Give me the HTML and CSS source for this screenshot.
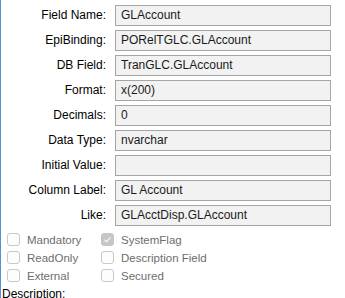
FILE: index.html
```html
<!DOCTYPE html>
<html>
<head>
<meta charset="utf-8">
<link rel="stylesheet" href="styles.css">
</head>
<body>
<div class="panel">
  <div class="fields">
    <label class="lbl">Field Name:</label><div class="box">GLAccount</div>
    <label class="lbl">EpiBinding:</label><div class="box">PORelTGLC.GLAccount</div>
    <label class="lbl">DB Field:</label><div class="box">TranGLC.GLAccount</div>
    <label class="lbl">Format:</label><div class="box">x(200)</div>
    <label class="lbl">Decimals:</label><div class="box">0</div>
    <label class="lbl">Data Type:</label><div class="box">nvarchar</div>
    <label class="lbl">Initial Value:</label><div class="box"></div>
    <label class="lbl">Column Label:</label><div class="box">GL Account</div>
    <label class="lbl">Like:</label><div class="box">GLAcctDisp.GLAccount</div>
  </div>
  <div class="checks">
    <div class="chk"><span class="cb"></span><span class="ct">Mandatory</span></div>
    <div class="chk"><span class="cb checked"><svg width="13" height="13" viewBox="0 0 13 13"><path d="M3.5 6.8 L5.6 8.8 L9.6 4.4" fill="none" stroke="#f4f4f4" stroke-width="1.3"/></svg></span><span class="ct">SystemFlag</span></div>
    <div class="chk"><span class="cb"></span><span class="ct">ReadOnly</span></div>
    <div class="chk"><span class="cb"></span><span class="ct">Description Field</span></div>
    <div class="chk"><span class="cb"></span><span class="ct">External</span></div>
    <div class="chk"><span class="cb"></span><span class="ct">Secured</span></div>
  </div>
  <div class="desc">Description:</div>
</div>
</body>
</html>
```
FILE: styles.css
```css
html, body {
  margin: 0;
  padding: 0;
  background: #ffffff;
}
body {
  font-family: "Liberation Sans", Arial, sans-serif;
  font-size: 12px;
  color: #000;
}
.panel {
  width: 344px;
  height: 298px;
  border-left: 1px solid #5a8fd6;
  overflow: hidden;
}
.fields {
  display: grid;
  grid-template-columns: 105px 216px;
  column-gap: 9px;
  row-gap: 4px;
  padding-top: 5px;
}
.lbl {
  text-align: right;
  line-height: 21px;
  height: 21px;
  color: #000;
}
.box {
  box-sizing: border-box;
  height: 21px;
  border: 1px solid #a5a5a5;
  background: #f2f2f2;
  padding-left: 5px;
  line-height: 19px;
  color: #1a1a1a;
}
.checks {
  display: grid;
  grid-template-columns: 94px 150px;
  row-gap: 5px;
  padding-left: 6px;
  padding-top: 7px;
}
.chk {
  display: flex;
  align-items: center;
  height: 13px;
}
.cb {
  box-sizing: border-box;
  width: 13px;
  height: 13px;
  border: 1px solid #c9c9c9;
  border-radius: 3px;
  background: #fdfdfd;
  flex: none;
}
.cb.checked {
  background: #c6c6c6;
  border-color: #c6c6c6;
}
.cb svg {
  display: block;
  margin: -1px;
}
.ct {
  margin-left: 7px;
  color: #6d6d6d;
  font-size: 11.5px;
}
.desc {
  padding-left: 1px;
  margin-top: 5px;
  line-height: 14px;
}
```
